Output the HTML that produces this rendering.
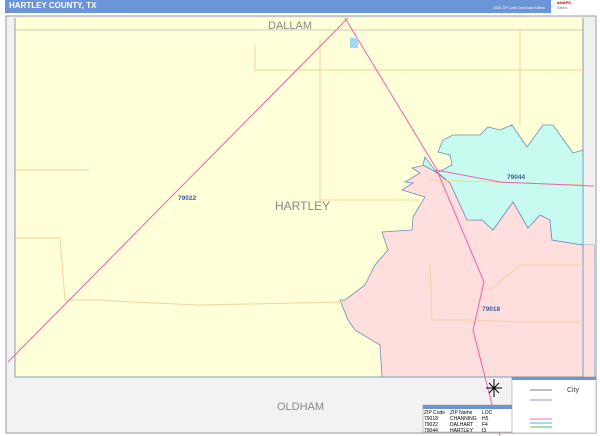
<!DOCTYPE html>
<html><head><style>
body{margin:0;width:600px;height:436px;overflow:hidden;background:#fff;font-family:"Liberation Sans",sans-serif}
.hdr{position:absolute;left:5px;top:0;width:546px;height:13px;background:#6b95d6}
.hdr b{position:absolute;left:4px;top:1px;color:#fff;font-size:8px}
.hdr i{position:absolute;right:6px;top:6px;color:#fff;font-size:3.5px;font-style:normal}
</style></head><body>
<div class="hdr"><b>HARTLEY COUNTY, TX</b><i>2026 ZIP Code ColorCast Edition</i></div>
<div style="position:absolute;left:553px;top:0;width:47px;height:13px;background:#fff;font-size:4px;color:#c00;font-weight:bold;line-height:5px;padding-left:4px">●MAPS<br><span style="color:#999">Sales</span></div>
<svg width="600" height="436" style="position:absolute;left:0;top:0" xmlns="http://www.w3.org/2000/svg">
<rect x="6" y="16" width="590" height="417" fill="#f2f2f2" stroke="#999" stroke-width="1"/>
<rect x="15" y="18" width="568" height="359" fill="#ffffd8"/>
<polygon points="583,18 594,18 594,376 583,376" fill="#f0f0f0"/>
<polygon points="412,168 420,173 405,182 413,183 402,190 425,197 413,217 412,230 382,232 388,250 375,265 365,285 345,300 340,300 348,320 355,330 380,345 382,377 583,377 583,245 594,245 594,377 583,377 583,245 552,240 550,220 540,215 528,228 513,202 493,230 482,220 467,220 450,183 437,173 425,165" fill="#ffdede" stroke="#6d8fb8" stroke-width="0.8"/>
<polygon points="425,157 423,165 432,170 437,172 450,183 467,220 482,220 493,230 513,202 528,228 540,215 550,220 552,240 583,245 583,150 573,153 553,125 543,125 527,147 512,125 500,130 488,127 480,135 453,135 443,140 438,152 450,155 452,165 437,173" fill="#c8fbef" stroke="#6d8fb8" stroke-width="0.8"/>
<polygon points="583,245 594,245 594,377 583,377" fill="#ffdede"/>
<line x1="15" y1="30" x2="583" y2="30" stroke="#c8c8c8" stroke-width="1"/>
<line x1="15" y1="377" x2="583" y2="377" stroke="#7a9cc0" stroke-width="1"/>
<line x1="15" y1="18" x2="15" y2="377" stroke="#999"/>
<line x1="583" y1="18" x2="583" y2="377" stroke="#7a9cc0"/>
<g stroke="#f6d2a0" stroke-width="1" fill="none">
<path d="M15,238 L60,238 L65,300 L100,300 L130,302 L200,305 L345,302"/>
<path d="M320,40 L320,200 L420,200"/>
<path d="M430,180 L583,185"/>
<path d="M430,265 L432,320 L470,320 L520,322 L583,322"/>
<path d="M490,290 L520,265 L583,265"/>
<path d="M255,45 L255,70 L583,70"/>
<path d="M520,30 L520,125"/>
<path d="M15,170 L90,170"/>
</g>
<g stroke="#f060b0" stroke-width="1" fill="none">
<path d="M8,362 L348,18"/>
<path d="M345,18 L436,168 L484,282 L473,330 L500,436"/>
<path d="M436,170 L500,182 L594,186"/>
</g>
<rect x="350" y="38" width="8" height="10" fill="#9fdcef"/>
<text x="268" y="29" font-size="11" fill="#888">DALLAM</text>
<text x="275" y="210" font-size="12" fill="#888">HARTLEY</text>
<text x="277" y="410" font-size="11" fill="#888">OLDHAM</text>
<g font-size="6.5" font-weight="bold" fill="#3a5f9a">
<text x="178" y="200">79022</text><text x="507" y="179">79044</text><text x="482" y="311">79018</text></g>
<g transform="translate(494,388)" stroke="#000" stroke-width="1"><line x1="-8" y1="0" x2="8" y2="0"/><line x1="0" y1="-9" x2="0" y2="9"/><line x1="-5" y1="-5" x2="5" y2="5"/><line x1="-5" y1="5" x2="5" y2="-5"/></g>
<rect x="423" y="405" width="90" height="27" fill="#fff" stroke="#888" stroke-width="0.5"/>
<rect x="423" y="405" width="90" height="4" fill="#6b95d6"/>
<g font-size="5" fill="#000"><text x="424" y="414">ZIP Code</text><text x="450" y="414">ZIP Name</text><text x="482" y="414">LOC</text>
<text x="424" y="420">79018</text><text x="450" y="420">CHANNING</text><text x="482" y="420">H5</text>
<text x="424" y="426">79022</text><text x="450" y="426">DALHART</text><text x="482" y="426">F4</text>
<text x="424" y="432">79044</text><text x="450" y="432">HARTLEY</text><text x="482" y="432">I3</text></g>
<rect x="512" y="377" width="84" height="56" fill="#fff" stroke="#888" stroke-width="0.5"/>
<rect x="512" y="377" width="84" height="3" fill="#6b95d6"/>
<g stroke-width="1.2"><line x1="530" y1="390" x2="552" y2="390" stroke="#999"/><line x1="530" y1="400" x2="552" y2="400" stroke="#aac"/><line x1="530" y1="419" x2="552" y2="419" stroke="#f8b"/><line x1="530" y1="423" x2="552" y2="423" stroke="#7bf"/><line x1="530" y1="427" x2="552" y2="427" stroke="#7c7"/></g>
<text x="567" y="392" font-size="7" fill="#444">City</text>
</svg>
</body></html>
